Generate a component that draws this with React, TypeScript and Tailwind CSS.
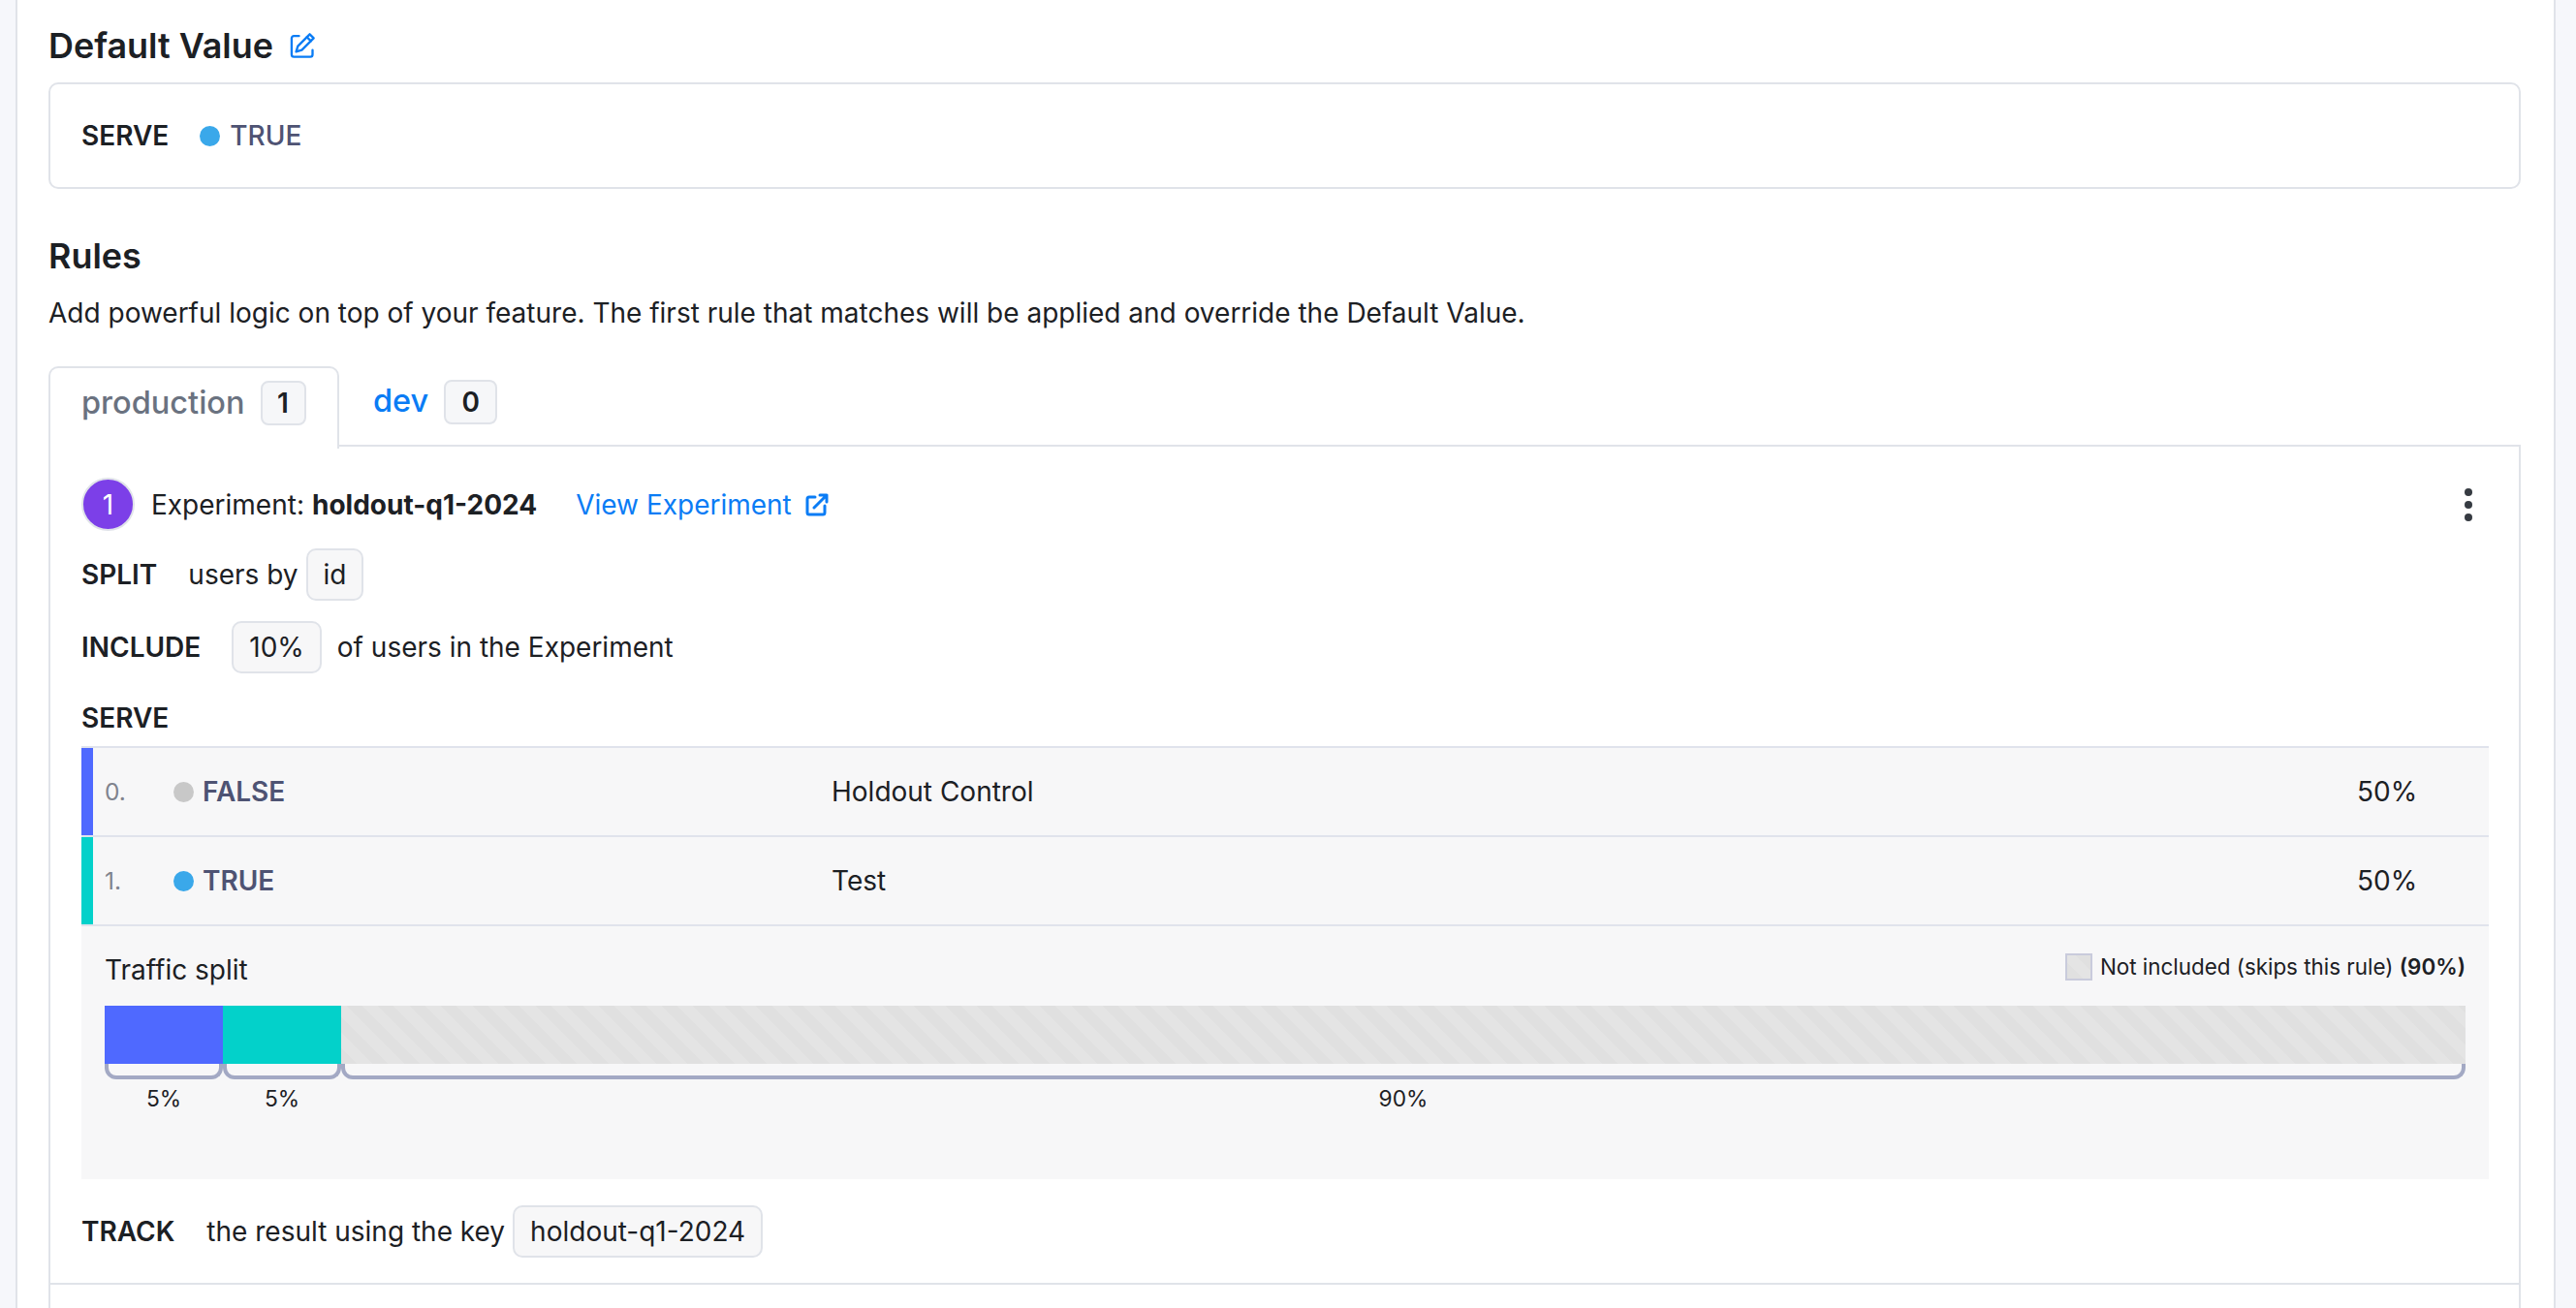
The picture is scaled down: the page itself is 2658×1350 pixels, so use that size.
import React from "react";

const inter = "font-['Inter',sans-serif]";
const stripes =
  "bg-[repeating-linear-gradient(45deg,#e0e0e0_0px,#e0e0e0_11.5px,#e4e4e4_11.5px,#e4e4e4_23px)]";

function Chip({ children, className = "" }: { children: React.ReactNode; className?: string }) {
  return (
    <span
      className={
        "inline-flex h-[54px] items-center rounded-[10px] border-2 border-[#e0e3e9] bg-[#f7f7f8] px-[16px] text-[28px] " +
        className
      }
    >
      {children}
    </span>
  );
}

function Count({ children, className }: { children: React.ReactNode; className: string }) {
  return (
    <span
      className={
        "ml-[16px] inline-flex h-[46px] items-center justify-center rounded-[8px] border-2 border-[#e0e3e9] bg-[#f6f7f9] text-[28px] font-semibold text-[#1c2024] " +
        className
      }
    >
      {children}
    </span>
  );
}

function Row({
  bar,
  idx,
  dot,
  label,
  name,
  pct,
}: {
  bar: string;
  idx: string;
  dot: string;
  label: string;
  name: string;
  pct: string;
}) {
  return (
    <div className="flex h-[92px] border-b-2 border-[#e0e3ec] text-[28px]">
      <div className={"w-[12px] " + bar} />
      <div className="flex w-[83px] items-center pl-[12px] text-[24.5px] text-[#80838d]">{idx}</div>
      <div className="flex w-[679px] items-center">
        <span className={"mr-[9px] h-[21px] w-[21px] rounded-full " + dot} />
        <span className="font-semibold text-[#4e5373]">{label}</span>
      </div>
      <div className="flex-1 self-center text-[#1c2024]">{name}</div>
      <div className="w-[136px] self-center text-[#1c2024]">{pct}</div>
    </div>
  );
}

function Bracket({ className, label }: { className: string; label: string }) {
  return (
    <div className={"flex flex-col items-center " + className}>
      <div className="h-[16px] w-full rounded-b-[12px] border-x-[4px] border-b-[4px] border-[#a3a9c4]" />
      <div className="mt-[7px] text-[22.75px] leading-[26px] text-[#1c2024]">{label}</div>
    </div>
  );
}

export default function App() {
  return (
    <div className={inter + " h-[1350px] overflow-hidden bg-[#f6f7fb] px-[16px] text-[#1c2024]"}>
      <div className="h-full w-[2621px] border-x-2 border-[#e0e3e9] bg-white px-[32px]">
        <div className="flex h-[85px] items-center pt-[8px]">
          <h2 className="text-[35.9px] leading-[48px] font-semibold text-[#1c2024]">Default Value</h2>
          <svg
            className="ml-[16px] h-[28px] w-[28px]"
            viewBox="0 0 24 24"
            fill="none"
            stroke="#0a7cf5"
            strokeWidth="2"
            strokeLinecap="round"
            strokeLinejoin="round"
          >
            <path d="M9 3.5H4.5A2 2 0 0 0 2.5 5.5V20a2 2 0 0 0 2 2H19a2 2 0 0 0 2-2v-4" />
            <path d="M18.5 2l3.5 3.5L11.5 16l-5 1.5 1.5-5z" />
            <path d="M16 4.5l3.5 3.5" />
          </svg>
        </div>
        <div className="flex h-[110px] w-[2551px] items-center rounded-[10px] border-2 border-[#e0e3e9] px-[32px] text-[28px]">
          <span className="font-semibold">SERVE</span>
          <span className="ml-[32px] mr-[10px] h-[21px] w-[21px] rounded-full bg-[#3aa8ea]" />
          <span className="font-medium text-[#4e5373]">TRUE</span>
        </div>

        <h2 className="mt-[45px] text-[35.9px] leading-[48px] font-semibold">Rules</h2>
        <p className="mt-[15px] text-[28px] leading-[40px]">
          Add powerful logic on top of your feature. The first rule that matches will be applied and
          override the Default Value.
        </p>

        <div className="mt-[33px] flex h-[85px] w-[2551px] items-end">
          <div className="relative z-10 -mb-[2px] flex h-[85px] w-[300px] items-center rounded-t-[10px] border-x-2 border-t-2 border-[#e0e3e9] bg-white pl-[32px] pb-[11px]">
            <span className="text-[32.5px] font-medium text-[#6a7280]">production</span>
            <Count className="w-[47px]">1</Count>
          </div>
          <div className="flex h-[83px] flex-1 items-center border-b-2 border-[#e0e3e9] pl-[35px] pb-[8px]">
            <span className="text-[32.5px] font-medium text-[#0a7cf5]">dev</span>
            <Count className="w-[55px]">0</Count>
          </div>
        </div>

        <div className="h-[900px] w-[2551px] border-x-2 border-[#e0e3e9] px-[32px]">
          <div className="flex h-[92px] items-center pt-[27px] text-[28px]">
            <span className="flex h-[55px] w-[55px] items-center justify-center rounded-full border-2 border-[#e0e3e9] bg-[#7c3fe8] text-[28px] text-white">
              1
            </span>
            <span className="ml-[17px]">Experiment:</span>
            <span className="ml-[8px] font-bold">holdout-q1-2024</span>
            <span className="ml-[40px] text-[#0a7cf5]">View Experiment</span>
            <svg
              className="ml-[14px] h-[24px] w-[24px]"
              viewBox="0 0 24 24"
              fill="none"
              stroke="#0a7cf5"
              strokeWidth="3"
              strokeLinecap="round"
              strokeLinejoin="round"
            >
              <path d="M10 4H4a2 2 0 0 0-2 2v14a2 2 0 0 0 2 2h14a2 2 0 0 0 2-2v-7" />
              <path d="M9 15L22 2M15 2h7v7" />
            </svg>
            <span className="ml-auto mr-[16px] flex flex-col gap-[5px]">
              <span className="h-[8px] w-[8px] rounded-full bg-[#363b42]" />
              <span className="h-[8px] w-[8px] rounded-full bg-[#363b42]" />
              <span className="h-[8px] w-[8px] rounded-full bg-[#363b42]" />
            </span>
          </div>

          <div className="mt-[13px] flex items-center text-[28px]">
            <span className="font-semibold">SPLIT</span>
            <span className="ml-[32px] mr-[8px]">users by</span>
            <Chip>id</Chip>
          </div>
          <div className="mt-[21px] flex items-center text-[28px]">
            <span className="font-semibold">INCLUDE</span>
            <Chip className="ml-[32px] mr-[16px]">10%</Chip>
            <span>of users in the Experiment</span>
          </div>
          <div className="mt-[26px] text-[28px] leading-[40px] font-semibold">SERVE</div>

          <div className="mt-[9px] w-[2484px] border-t-2 border-[#e0e3ec] bg-[#f7f7f8]">
            <Row bar="bg-[#4f69ff]" idx="0." dot="bg-[#c8c8c8]" label="FALSE" name="Holdout Control" pct="50%" />
            <Row bar="bg-[#03d1ca]" idx="1." dot="bg-[#3aa8ea]" label="TRUE" name="Test" pct="50%" />
            <div className="h-[261px] px-[24px]">
              <div className="flex h-[82px] items-center justify-between pt-[7px]">
                <span className="text-[28px]">Traffic split</span>
                <span className="mb-[6px] flex items-center text-[22.4px]">
                  <span className={"mr-[8px] mt-[2px] h-[28px] w-[28px] border-2 border-[#c9cbdc] " + stripes} />
                  <span>
                    Not included (skips this rule) <b className="font-semibold">(90%)</b>
                  </span>
                </span>
              </div>
              <div className="flex h-[60px]">
                <div className="w-[122px] bg-[#4f69ff]" />
                <div className="w-[122px] bg-[#03d1ca]" />
                <div className={"flex-1 " + stripes} />
              </div>
              <div className="flex">
                <Bracket className="w-[122px]" label="5%" />
                <Bracket className="w-[122px]" label="5%" />
                <Bracket className="flex-1" label="90%" />
              </div>
            </div>
          </div>

          <div className="mt-[27px] flex items-center text-[28px]">
            <span className="font-semibold">TRACK</span>
            <span className="ml-[33px] mr-[8px]">the result using the key</span>
            <Chip>holdout-q1-2024</Chip>
          </div>
          <div className="-mx-[32px] mt-[26px] border-t-2 border-[#e0e3e9]" />
        </div>
      </div>
    </div>
  );
}
